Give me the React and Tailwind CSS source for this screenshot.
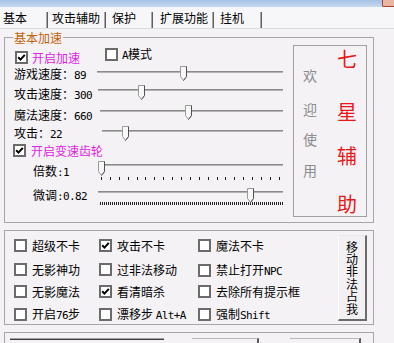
import React from 'react'

const MONO = "font-['DejaVu_Sans_Mono',monospace] text-[11px] tracking-[-0.6px]"

function Check({ checked }) {
  return (
    <span className="flex h-[13px] w-[13px] shrink-0 items-center justify-center border-2 border-[#6b6b6b] bg-white">
      {checked && (
        <svg width="9" height="9" viewBox="0 0 9 9">
          <path d="M1.2 4.2 L3.5 6.6 L7.8 1.8" fill="none" stroke="#000" strokeWidth="2" />
        </svg>
      )}
    </span>
  )
}

function Thumb({ at, top }) {
  return (
    <svg className={`absolute ${top}`} style={{ left: at }} width="7" height="15" viewBox="0 0 7 15">
      <path d="M0.5 0.5H6.5V10.5L3.5 14.5L0.5 10.5Z" fill="#f8f8f8" stroke="#9a9a9a" />
      <path d="M6.5 0.5V10.5L3.5 14.5" fill="none" stroke="#505050" />
    </svg>
  )
}

function Track({ className }) {
  return <div className={`h-[2px] border-t border-[#8a8a8a] bg-[#b4b4b4] ${className}`} />
}

const tabs = [
  { label: '基本', cls: 'w-[46px] pl-[3px]' },
  { label: '攻击辅助', cls: 'w-[56px] pl-[4px]' },
  { label: '保护', cls: 'w-[45px] pl-[6px]' },
  { label: '扩展功能', cls: 'w-[59px] pl-[7px]' },
  { label: '挂机', cls: 'w-[46px] pl-[6px]' },
]

const options = [
  [
    { a: '超级不卡' },
    { a: '攻击不卡', on: true },
    { a: '魔法不卡' },
  ],
  [
    { a: '无影神功' },
    { a: '过非法移动' },
    { a: '禁止打开', b: 'NPC' },
  ],
  [
    { a: '无影魔法' },
    { a: '看清暗杀', on: true },
    { a: '去除所有提示框' },
  ],
  [
    { a: '开启', b: '76', c: '步' },
    { a: '漂移步 ', b: 'Alt+A' },
    { a: '强制', b: 'Shift' },
  ],
]

const rowHeights = ['h-[24px]', 'h-[22px]', 'h-[22px]', 'h-[13px]']
const colWidths = ['ml-[9px] w-[85px]', 'w-[99px]', '']

function Option({ item }) {
  return (
    <div className="flex items-center gap-[5px] whitespace-nowrap">
      <Check checked={item.on} />
      <span>
        {item.a}
        {item.b && <span className={MONO}>{item.b}</span>}
        {item.c}
      </span>
    </div>
  )
}

export default function App() {
  return (
    <div className="h-[343px] w-[394px] overflow-hidden bg-[#f4f2f5] font-['Noto_Sans_CJK_SC',sans-serif] text-[12px] leading-[13px] text-black">
      <div className="flex h-[7px] justify-end bg-linear-to-b from-[#a4c1e5] to-[#c6d9ef]">
        <div className="h-[7px] w-[12px] rounded-bl-[2px] border-b border-l border-[#a4442c] bg-[#e8b6a2]" />
      </div>

      <div className="flex h-[21px] items-end bg-[#f7f6f9]">
        {tabs.map((t) => (
          <React.Fragment key={t.label}>
            <div className={`h-[21px] shrink-0 pt-[4px] ${t.cls}`}>{t.label}</div>
            <div className="h-[16px] w-[2px] shrink-0 border-l border-r border-l-[#a8a8a8] border-r-[#5e5e5e]" />
          </React.Fragment>
        ))}
      </div>

      <div className="border-t border-[#dcdbe0] px-[4px] pt-[8px]">
        {/* 基本加速 */}
        <div className="relative flex h-[186px] w-[370px] border border-[#a6a6a6]">
          <span className="absolute -top-[7px] left-[8px] bg-[#f4f2f5] px-[1px] text-[#c46208]">基本加速</span>

          <div className="w-[288px] shrink-0 pt-[9px]">
            <div className="flex h-[18px] items-start">
              <div className="ml-[10px] mt-[4px] flex items-center gap-[4px]">
                <Check checked />
                <span className="text-[#e022e6]">开启加速</span>
              </div>
              <div className="ml-[25px] flex items-center gap-[4px]">
                <Check />
                <span>
                  <span className={MONO}>A</span>模式
                </span>
              </div>
            </div>

            <div className="flex h-[19px] items-start">
              <span className="ml-[9px] mt-[2px] w-[83px] shrink-0 whitespace-nowrap">
                游戏速度：<span className={MONO}>89</span>
              </span>
              <div className="relative w-[186px]">
                <Track className="mt-[6px]" />
                <Thumb at={83} top="top-[1px]" />
              </div>
            </div>

            <div className="flex h-[20px] items-start">
              <span className="ml-[9px] mt-[3px] w-[84px] shrink-0 whitespace-nowrap">
                攻击速度：<span className={MONO}>300</span>
              </span>
              <div className="relative w-[185px]">
                <Track className="mt-[5px]" />
                <Thumb at={40} top="top-[1px]" />
              </div>
            </div>

            <div className="flex h-[20px] items-start">
              <span className="ml-[9px] mt-[4px] w-[86px] shrink-0 whitespace-nowrap">
                魔法速度：<span className={MONO}>660</span>
              </span>
              <div className="relative w-[183px]">
                <Track className="mt-[6px]" />
                <Thumb at={85} top="top-[1px]" />
              </div>
            </div>

            <div className="flex h-[19px] items-start">
              <span className="ml-[9px] mt-[2px] w-[88px] shrink-0 whitespace-nowrap">
                攻击：<span className={MONO}>22</span>
              </span>
              <div className="relative w-[181px]">
                <Track className="mt-[6px]" />
                <Thumb at={20} top="top-[2px]" />
              </div>
            </div>

            <div className="flex h-[17px] items-start">
              <div className="ml-[8px] mt-[1px] flex items-center gap-[5px]">
                <Check checked />
                <span className="text-[#e022e6]">开启变速齿轮</span>
              </div>
            </div>

            <div className="flex h-[24px] items-start">
              <span className="ml-[28px] mt-[4px] w-[65px] shrink-0 whitespace-nowrap">
                倍数<span className={MONO}>:1</span>
              </span>
              <div className="relative w-[185px]">
                <Track className="mt-[4px]" />
                <div className="ml-[3px] mt-[11px] flex w-[179px] justify-between">
                  {Array.from({ length: 21 }, (_, i) => (
                    <span key={i} className="h-[3px] w-px bg-[#222]" />
                  ))}
                </div>
                <Thumb at={0} top="top-[1px]" />
              </div>
            </div>

            <div className="flex h-[24px] items-start">
              <span className="ml-[28px] mt-[4px] w-[65px] shrink-0 whitespace-nowrap">
                微调<span className={MONO}>:0.82</span>
              </span>
              <div className="relative w-[185px]">
                <Track className="mt-[7px]" />
                <div className="ml-[2px] mt-[9px] h-[3px] w-[183px] bg-[repeating-linear-gradient(90deg,#222_0px,#222_1px,transparent_1px,transparent_2px)]" />
                <Thumb at={149} top="top-[4px]" />
              </div>
            </div>
          </div>

          <div className="mt-[7px] flex h-[172px] w-[74px] shrink-0 border border-[#a0a0a0] pl-[9px]">
            <div className="flex w-[14px] flex-col text-[14px] leading-[14px] text-[#8c8c8c]">
              <span className="mt-[22px]">欢</span>
              <span className="mt-[20px]">迎</span>
              <span className="mt-[16px]">使</span>
              <span className="mt-[17px]">用</span>
            </div>
            <div className="ml-[20px] flex w-[20px] flex-col text-[20px] leading-[20px] text-[#e81818]">
              <span className="mt-[3px]">七</span>
              <span className="mt-[33px]">星</span>
              <span className="mt-[24px]">辅</span>
              <span className="mt-[28px]">助</span>
            </div>
          </div>
        </div>

        {/* 选项 */}
        <div className="mt-[7px] flex h-[95px] w-[370px] border border-[#a6a6a6]">
          <div className="flex flex-1 flex-col pt-[8px]">
            {options.map((row, r) => (
              <div key={r} className={`flex items-start ${rowHeights[r]}`}>
                {row.map((item, c) => (
                  <div key={c} className={`shrink-0 ${colWidths[c]}`}>
                    <Option item={item} />
                  </div>
                ))}
              </div>
            ))}
          </div>
          <button className="mr-[6px] mt-[4px] flex h-[86px] w-[29px] shrink-0 flex-col items-center border-b-2 border-l border-r-2 border-t border-b-[#6a6a6a] border-l-white border-r-[#6a6a6a] border-t-[#e8e8e8] bg-[#f2f0f3] pt-[5px]">
            <span className="text-[12px] leading-[13px] tracking-[0.4px] [text-orientation:upright] [writing-mode:vertical-rl]">
              移动非法占我
            </span>
          </button>
        </div>

        {/* 底部 */}
        <div className="mt-[7px] flex h-[20px] w-[370px] items-start border-l border-r border-t border-[#a6a6a6] pt-[5px]">
          <div className="ml-[5px] h-[10px] w-[154px] border-t border-[#a0a0a0] shadow-[inset_0_1px_0_#404040]" />
          <div className="ml-[28px] h-[10px] w-[67px] border-r-2 border-t border-r-[#5a5a5a] border-t-[#b8b8b8]" />
          <div className="ml-[31px] h-[10px] w-[71px] border-r-2 border-t border-r-[#5a5a5a] border-t-[#b8b8b8]" />
        </div>
      </div>
    </div>
  )
}
